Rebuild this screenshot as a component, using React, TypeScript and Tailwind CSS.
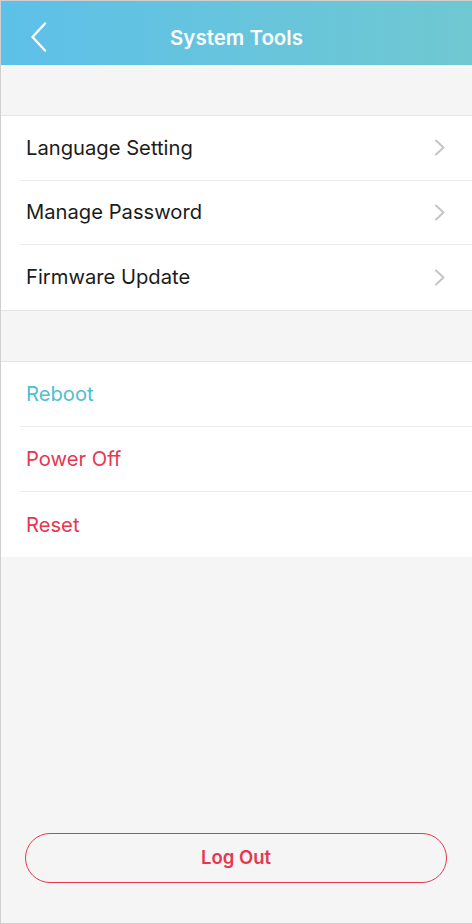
import React from "react";

const settings = ["Language Setting", "Manage Password", "Firmware Update"];

const actions = [
  { label: "Reboot", color: "text-[#4cbfd3]" },
  { label: "Power Off", color: "text-[#e8364f]" },
  { label: "Reset", color: "text-[#e8364f]" },
];

const Chevron = () => (
  <svg width="12" height="17" viewBox="0 0 12 17" fill="none" className="mr-[26px]">
    <path d="M2 1.5 L9.5 8.5 L2 15.5" stroke="#c5c5c8" strokeWidth="2" strokeLinecap="round" strokeLinejoin="round" />
  </svg>
);

const App: React.FC = () => {
  return (
    <div
      className="w-[472px] h-[924px] flex flex-col bg-[#f5f5f5] border-t border-l border-b border-[#cfcfcf] overflow-hidden"
      style={{ fontFamily: "Inter, 'Noto Sans', sans-serif" }}
    >
      {/* header */}
      <div className="h-[64px] shrink-0 relative flex items-center justify-center pt-[10px] bg-gradient-to-r from-[#5dc0e8] to-[#6fc8d1]">
        <button className="absolute left-[28px] top-[20px]">
          <svg width="20" height="32" viewBox="0 0 20 32" fill="none">
            <path d="M16 2.5 L3.5 16 L16 29.5" stroke="white" strokeWidth="2.4" strokeLinecap="round" strokeLinejoin="round" />
          </svg>
        </button>
        <h1 className="text-white text-[20.5px] font-semibold">System Tools</h1>
      </div>

      <div className="h-[50px] shrink-0" />

      <div className="bg-white border-t border-b border-[#e6e6e6]">
        {settings.map((s, i) => (
          <div key={s} className="pl-[19px]">
            <div
              className={
                "h-[64.5px] flex items-center justify-between pl-[6px] " +
                (i < settings.length - 1 ? "border-b border-[#ebebeb]" : "")
              }
            >
              <span className="text-[20.2px] text-[#1c1c1c]">{s}</span>
              <Chevron />
            </div>
          </div>
        ))}
      </div>

      <div className="h-[50px] shrink-0" />

      <div className="bg-white border-t border-[#e6e6e6]">
        {actions.map((a, i) => (
          <div key={a.label} className="pl-[19px]">
            <div
              className={
                "h-[65px] flex items-center pl-[6px] pt-[2px] " +
                (i < actions.length - 1 ? "border-b border-[#ebebeb]" : "")
              }
            >
              <span className={"text-[20.2px] " + a.color}>{a.label}</span>
            </div>
          </div>
        ))}
      </div>

      <div className="flex-1" />

      <div className="px-[24px] pb-[40px]">
        <button className="w-[422px] h-[50px] rounded-full border-[1.5px] border-[#e8364f] text-[#e8364f] text-[18.5px] font-semibold">
          Log Out
        </button>
      </div>
    </div>
  );
};

export default App;
